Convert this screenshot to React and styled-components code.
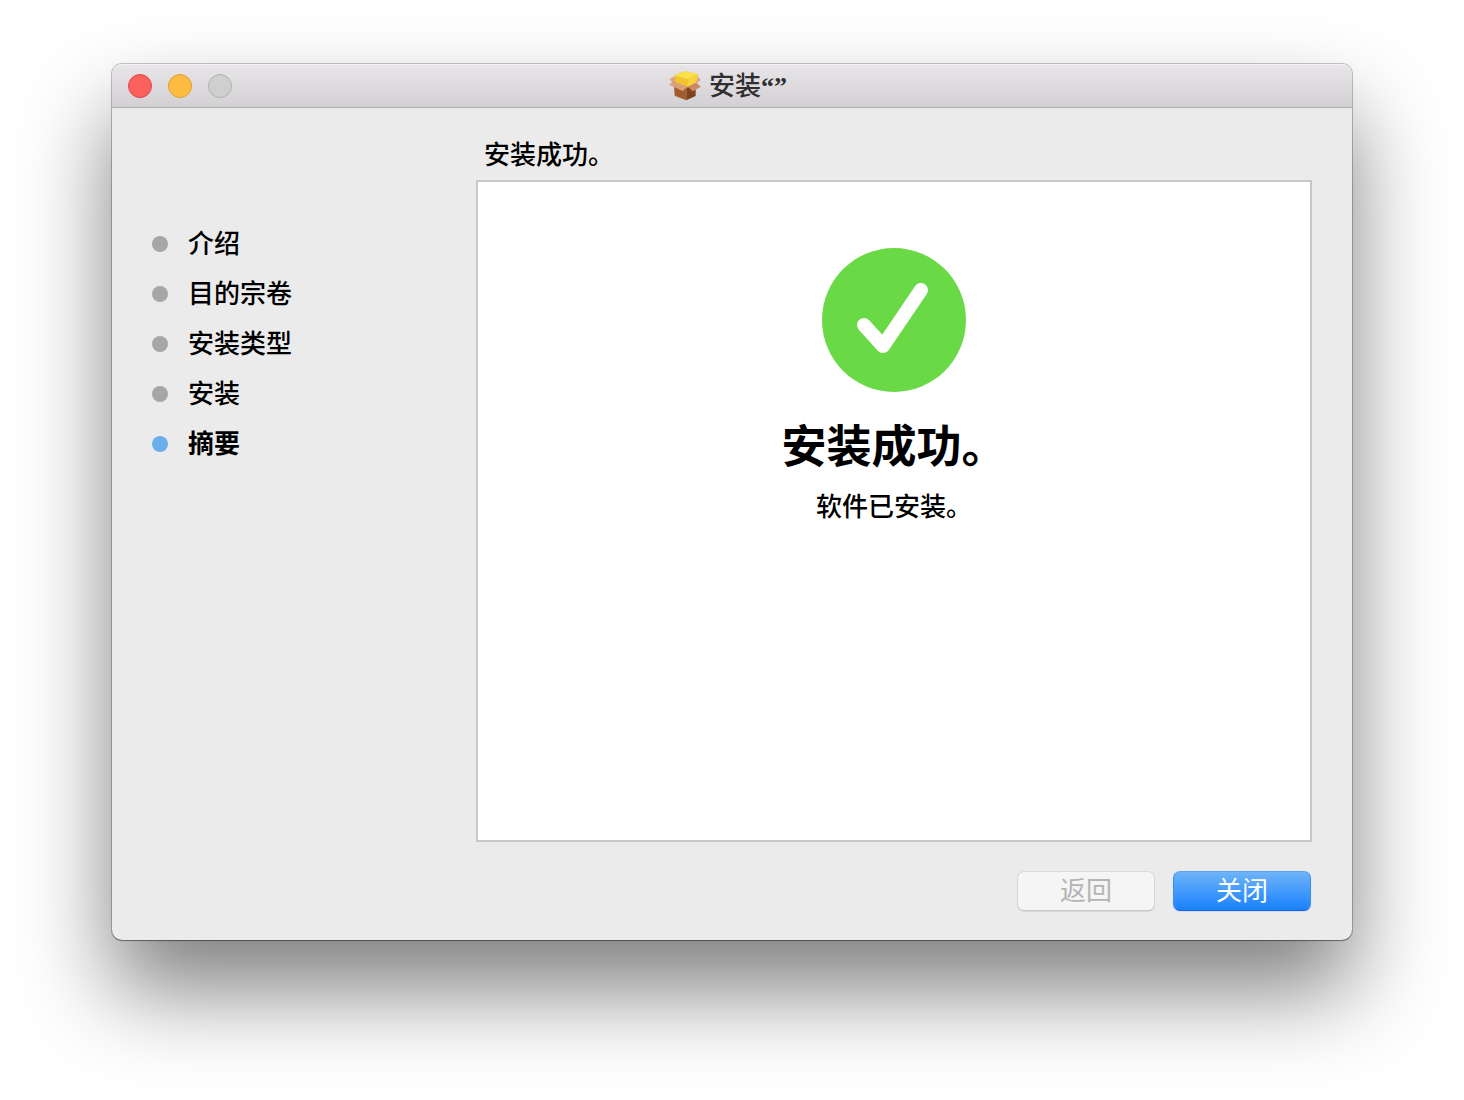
import React from "react";
import styled, { createGlobalStyle } from "styled-components";

const GlobalStyle = createGlobalStyle`
  *, *::before, *::after { box-sizing: border-box; }
  body {
    margin: 0;
    background: #fff;
    color: #000;
    font-family: Inter, "Noto Sans CJK SC", sans-serif;
    font-size: 26px;
    font-weight: 500;
    line-height: 36px;
  }
`;

const Desktop = styled.div`
  display: flex;
  min-height: 100vh;
  padding: 64px 112px 160px;
`;

const Window = styled.main`
  flex: 1;
  display: flex;
  flex-direction: column;
  border-radius: 10px;
  background: #ebebeb;
  box-shadow:
    0 0 0 1px rgba(0, 0, 0, 0.22),
    0 1px 1px rgba(0, 0, 0, 0.3),
    0 50px 90px rgba(0, 0, 0, 0.5);
`;

const TitleBar = styled.header`
  display: grid;
  grid-template-columns: 1fr auto 1fr;
  align-items: center;
  height: 44px;
  padding: 0 16px;
  border-radius: 10px 10px 0 0;
  background: linear-gradient(#e8e6e8, #d2d0d2);
  box-shadow: inset 0 1px 0 #f4f3f4, inset 0 -1px 0 #b0aeb0;
`;

const Controls = styled.div`
  display: flex;
  gap: 16px;
`;

const ControlButton = styled.button`
  width: 24px;
  height: 24px;
  padding: 0;
  border: 1px solid ${(p) => p.$edge};
  border-radius: 50%;
  background: ${(p) => p.$fill};
`;

const Title = styled.h1`
  display: flex;
  align-items: center;
  gap: 8px;
  margin: 0;
  padding-right: 8px;
  color: #2f2f31;
  font-family: Roboto, "Noto Sans CJK SC", sans-serif;
  font-size: 26px;
  font-weight: 500;
  line-height: 38px;
`;

const Quotes = styled.span`
  font-family: "Liberation Serif", serif;
  font-weight: 700;
`;

const Content = styled.div`
  flex: 1;
  display: grid;
  grid-template-columns: 324px 1fr;
  padding: 29px 40px;
`;

const Steps = styled.ol`
  display: flex;
  flex-direction: column;
  gap: 14px;
  margin: 0;
  padding: 89px 0 0;
  list-style: none;
`;

const Step = styled.li`
  display: flex;
  align-items: center;
  gap: 20px;
  font-weight: ${(p) => (p.$current ? 700 : 500)};

  &::before {
    content: "";
    width: 16px;
    height: 16px;
    border-radius: 50%;
    background: ${(p) => (p.$current ? "#6aafec" : "#a6a6a6")};
  }
`;

const Main = styled.section`
  display: flex;
  flex-direction: column;
`;

const PaneTitle = styled.h2`
  margin: 0;
  padding: 0 8px 7px;
  font-size: 26px;
  font-weight: 500;
`;

const Pane = styled.div`
  flex: 1;
  display: flex;
  flex-direction: column;
  align-items: center;
  padding: 66px 24px;
  border: 2px solid #c8c8c8;
  background: #fff;
  text-align: center;
`;

const Headline = styled.h3`
  margin: 25px 0 12px;
  font-size: 45px;
  line-height: 60px;
  font-weight: 600;
`;

const Message = styled.p`
  margin: 0;
`;

const Actions = styled.footer`
  display: flex;
  justify-content: flex-end;
  gap: 18px;
  padding: 29px 1px 0;
`;

const Button = styled.button`
  width: 138px;
  height: 40px;
  padding: 0;
  border: 1px solid;
  border-color: ${(p) => (p.$primary ? "#5aa5f2 #3a8df5 #1464f5" : "#dadada #d6d6d6 #c8c8c8")};
  border-radius: 7px;
  background: ${(p) => (p.$primary ? "linear-gradient(#6eb4f8, #1a81ff)" : "#f5f5f5")};
  box-shadow: 0 1px 1px rgba(0, 0, 0, 0.08);
  color: ${(p) => (p.$primary ? "#fff" : "#b4b4b4")};
  font: inherit;
  font-weight: 400;
`;

const PackageIcon = () => (
  <svg width="32" height="30" viewBox="10 11 96 90" aria-hidden="true">
    <path d="M26 40 60 28l29 14v20H26z" fill="#a8652f" />
    <path d="M11 36 30 25v16l-8 6zM92 24l13 13-12 12-6-8z" fill="#dda582" />
    <path d="M25 55 62 62v37L27 85z" fill="#a15c2c" />
    <path d="M62 62 90 54v32L62 99z" fill="#7f431b" />
    <path d="M27 24 57 12l41 9-7 27-26 12-36-14z" fill="#f0c62c" />
    <path d="M27 24 57 12l41 9-30 15z" fill="#fae04a" />
    <path d="M68 36 98 21l-7 27-26 12z" fill="#f5d040" />
    <path d="M23 42 66 58 51 71 10 52z" fill="#dca078" />
    <path d="M66 58 91 46l15 12-25 14z" fill="#c98a62" />
  </svg>
);

const SuccessIcon = () => (
  <svg width="144" height="144" viewBox="0 0 144 144" role="img" aria-label="成功">
    <circle cx="72" cy="72" r="72" fill="#69d945" />
    <path d="M42 77 61 98 99 42" fill="none" stroke="#fff" strokeWidth="14" strokeLinecap="round" strokeLinejoin="round" />
  </svg>
);

const steps = ["介绍", "目的宗卷", "安装类型", "安装", "摘要"];

export default function App() {
  return (
    <>
      <GlobalStyle />
      <Desktop>
        <Window>
          <TitleBar>
            <Controls>
              <ControlButton $fill="#fc605c" $edge="#e0464a" aria-label="关闭窗口" />
              <ControlButton $fill="#fdbc40" $edge="#e0a033" aria-label="最小化" />
              <ControlButton $fill="#cfcfcf" $edge="#b0b0b0" aria-label="缩放" disabled />
            </Controls>
            <Title>
              <PackageIcon />
              <span>
                安装<Quotes>“”</Quotes>
              </span>
            </Title>
          </TitleBar>
          <Content>
            <Steps>
              {steps.map((name) => (
                <Step key={name} $current={name === "摘要"} aria-current={name === "摘要" ? "step" : undefined}>
                  {name}
                </Step>
              ))}
            </Steps>
            <Main>
              <PaneTitle>安装成功。</PaneTitle>
              <Pane>
                <SuccessIcon />
                <Headline>安装成功。</Headline>
                <Message>软件已安装。</Message>
              </Pane>
              <Actions>
                <Button disabled>返回</Button>
                <Button $primary>关闭</Button>
              </Actions>
            </Main>
          </Content>
        </Window>
      </Desktop>
    </>
  );
}
